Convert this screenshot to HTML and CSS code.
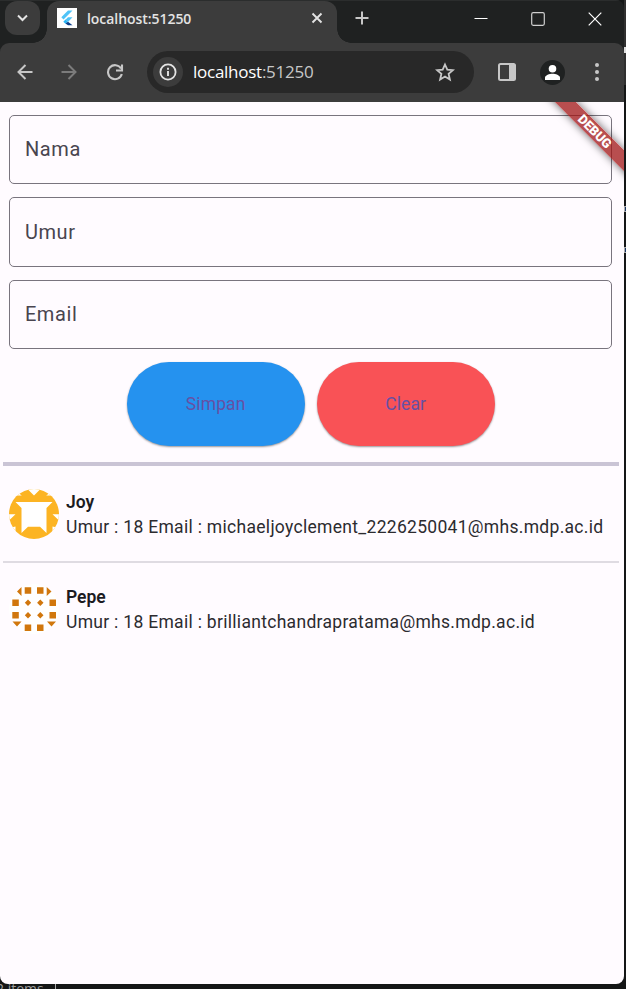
FILE: index.html
```html
<!DOCTYPE html>
<html lang="id">
<head>
<meta charset="utf-8">
<title>localhost:51250</title>
<link rel="stylesheet" href="styles.css">
</head>
<body>
<div class="behind-edge" aria-hidden="true"><i class="edge-cap"></i><i class="edge-mark m1"></i><i class="edge-mark m2"></i></div>
<div class="behind-bottom" aria-hidden="true"><span>2 items</span><i></i></div>
<div class="window">
  <header class="tabstrip">
    <button class="tab-search"><svg width="35" height="35" viewBox="0 0 35 35"><path d="M13 14.500l4.500 4.500 4.500-4.500" fill="none" stroke="#e3e3e3" stroke-width="2"/></svg></button>
    <div class="tab">
      <svg class="favicon" width="20" height="20" viewBox="0 0 20 20"><path fill="#fff" d="M0 0h20v20H0z"/><path fill="#4fc3f7" d="M11 2.500h4.500L6.500 11.500 4.300 9.300zM11 9.200h4.500L11 14l-2.500-2.300z"/><path fill="#27b6f6" d="M8.500 11.500l2.200 2.200-2.200 2-2.200-2z"/><path fill="#0b3f8c" d="M8.500 15.500L11 13.800l4.500 3.500H11z"/></svg>
      <span class="tab-title">localhost:51250</span>
      <svg class="tab-close" width="12" height="12" viewBox="0 0 12 12"><path d="M1.500 1.500l9 9m0-9l-9 9" stroke="#e3e3e3" stroke-width="1.900"/></svg>
    </div>
    <svg class="new-tab" width="14" height="14" viewBox="0 0 14 14"><path d="M7 .5v13M.5 7h13" stroke="#c7c7c7" stroke-width="2"/></svg>
    <div class="controls">
      <svg width="14" height="14" viewBox="0 0 14 14"><path d="M.5 6.500h13" stroke="#fff"/></svg>
      <svg width="14" height="14" viewBox="0 0 14 14"><rect x=".7" y=".7" width="12.600" height="12.600" rx="1.500" fill="none" stroke="#cfcfcf" stroke-width="1.200"/></svg>
      <svg width="14" height="14" viewBox="0 0 14 14"><path d="M.7.7l12.600 12.600m0-12.600L.7 13.300" stroke="#fff" stroke-width="1.200"/></svg>
    </div>
  </header>
  <nav class="toolbar">
    <svg class="back" width="16" height="16" viewBox="0 0 16 16"><path d="M15.500 8H2M8.500 1L1.500 8l7 7" fill="none" stroke="#c7c7c7" stroke-width="2"/></svg>
    <svg class="forward" width="16" height="16" viewBox="0 0 16 16"><path d="M.5 8H14M7.500 1l7 7-7 7" fill="none" stroke="#7b7b7b" stroke-width="2"/></svg>
    <svg class="reload" width="18" height="18" viewBox="0 0 18 18"><path d="M15 5.500A7 7 0 1 0 15.800 11M16 1.500v6h-6" fill="none" stroke="#c7c7c7" stroke-width="2.100"/></svg>
    <div class="address">
      <span class="site-info"><svg width="18" height="18" viewBox="0 0 18 18"><circle cx="9" cy="9" r="7.600" fill="none" stroke="#e3e3e3" stroke-width="1.800"/><path d="M9 8v5M9 4.700v2" stroke="#e3e3e3" stroke-width="1.900"/></svg></span>
      <span class="url">localhost<span>:51250</span></span>
      <svg class="star" width="20" height="20" viewBox="0 0 20 20"><path d="M10 2.500l2.300 5.200 5.600.5-4.300 3.700 1.300 5.600-4.900-3-4.900 3 1.300-5.600-4.300-3.700 5.600-.5z" fill="none" stroke="#c7c7c7" stroke-width="1.800"/></svg>
    </div>
    <svg class="panel" width="18" height="18" viewBox="0 0 18 18"><rect x="1" y="1" width="16" height="16" rx="1.500" fill="none" stroke="#c7c7c7" stroke-width="2"/><path d="M11 1h6v16h-6z" fill="#c7c7c7"/></svg>
    <svg class="profile" width="25" height="25" viewBox="0 0 25 25"><circle cx="12.500" cy="12.500" r="12.500" fill="#1f2121"/><circle cx="12.500" cy="8.700" r="3.800" fill="#fff"/><path d="M5 20v-2.200c0-2.500 4.500-4 7.500-4s7.500 1.500 7.500 4V20z" fill="#fff"/></svg>
    <svg class="more" width="4" height="18" viewBox="0 0 4 18"><g fill="#c7c7c7"><circle cx="2" cy="2" r="2"/><circle cx="2" cy="9" r="2"/><circle cx="2" cy="16" r="2"/></g></svg>
  </nav>
  <main class="app">
    <div class="debug"><span>DEBUG</span></div>
    <form class="form">
      <label class="field">Nama</label>
      <label class="field">Umur</label>
      <label class="field">Email</label>
      <div class="actions">
        <button type="button" class="save">Simpan</button>
        <button type="button" class="clear">Clear</button>
      </div>
    </form>
    <ul class="list">
      <li>
        <svg class="avatar" width="50" height="50" viewBox="0 0 50 50"><defs><clipPath id="round"><circle cx="25" cy="25" r="25"/></clipPath></defs><circle cx="25" cy="25" r="25" fill="#fcb423"/><g clip-path="url(#round)" fill="#fff"><path d="M6.500 13h37L37.500 19v25L31 37.700H19L12.500 44V19z"/><path d="M18.500 0h13L25 6.500zM8 6.500h4.800L10 4.500 16 1V0H5zM42 6.500h-4.800L40 4.500 34 1V0h11zM0 25.200h6.500L0 31.500zM50 25.200h-6.500l6.500 6.300zM6.500 37.500v6L0 39zM43.500 37.500v6L50 39z"/></g></svg>
        <div class="person"><strong>Joy</strong><span>Umur : 18 Email : michaeljoyclement_2226250041@mhs.mdp.ac.id</span></div>
      </li>
      <li>
        <svg class="avatar" width="50" height="50" viewBox="0 0 50 50"><circle cx="25" cy="25" r="25" fill="#fff"/><g fill="#d1770d"><path d="M15.700 3.200h6.500v6.500h-6.500zM28 3.200h6.500v6.500H28zM3.300 15.500h6.500V22H3.300zM40.500 15.500H47V22h-6.500zM3.300 28h6.500v6.500H3.300zM40.500 28H47v6.500h-6.500zM15.700 40.500h6.500V47h-6.500zM28 40.500h6.500V47H28z"/><path d="M12.500 3v9L8 7.500zM37.700 3v9l4.800-4.500zM3.500 37.500h9L8 42.500zM38 37.500h9L42.500 42.500zM19 15.500l3.200 3.200-3.200 3.200-3.200-3.200zM31.300 15.500l3.200 3.200-3.200 3.200-3.200-3.200zM19 28l3.200 3.200-3.200 3.200-3.200-3.200zM31.300 28l3.200 3.200-3.200 3.200-3.200-3.200z"/></g></svg>
        <div class="person"><strong>Pepe</strong><span>Umur : 18 Email : brilliantchandrapratama@mhs.mdp.ac.id</span></div>
      </li>
    </ul>
  </main>
</div>
</body>
</html>
```
FILE: styles.css
```css
* { box-sizing: border-box; }
body { margin: 0; width: 626px; height: 989px; overflow: hidden; position: relative; background: #141616; font-family: Roboto, sans-serif; }
svg { display: block; flex: none; }
button { border: 0; padding: 0; font: inherit; }
.window { position: relative; width: 624px; height: 984px; border-radius: 0 8px 8px 8px; overflow: hidden; background: #1f2121; display: flex; flex-direction: column; }
.behind-edge { position: absolute; left: 624px; top: 0; width: 2px; height: 85px; background: #303030; }
.edge-cap { position: absolute; top: 47px; left: 0; width: 2px; height: 6px; background: #ddd; }
.edge-mark { position: absolute; left: 0; width: 2px; height: 6px; border: 1px solid #aaa; border-right: 0; background: #173260; }
.m1 { top: 206px; }
.m2 { top: 247px; }
.behind-bottom { position: absolute; left: -4px; top: 980px; height: 9px; width: 150px; overflow: hidden; color: #9b9b9b; font: 14px/18px "Open Sans", sans-serif; }
.behind-bottom i { position: absolute; left: 59px; top: 4px; width: 1px; height: 5px; background: #aaa; }
.tabstrip { height: 43px; flex: none; display: flex; align-items: flex-start; padding-left: 5px; border-top: 1px solid #2b2d2d; }
.tab-search { position: relative; z-index: 1; width: 35px; height: 34px; border-radius: 12px; background: #3c3c3c; }
.tab { position: relative; margin-left: 7px; width: 290px; height: 42px; background: #3c3c3c; border-radius: 12px 12px 0 0; display: flex; padding: 7px 0 0 10px; }
.tab::before, .tab::after { content: ""; position: absolute; bottom: 0; width: 14px; height: 14px; }
.tab::before { left: -14px; background: radial-gradient(circle at 0 0, #1f2121 13.500px, #3c3c3c 14px); }
.tab::after { right: -14px; background: radial-gradient(circle at 100% 0, #1f2121 13.500px, #3c3c3c 14px); }
.tab-title { margin-left: 10px; width: 120px; font: 600 14px/22px "Open Sans", sans-serif; letter-spacing: -.05px; color: #e3e3e3; white-space: nowrap; }
.tab-close { margin: 4px 0 0 104px; }
.new-tab { margin: 10px 0 0 18px; }
.controls { margin-left: auto; padding: 11px 22px 0 0; display: flex; gap: 43px; }
.toolbar { height: 59px; flex: none; display: flex; align-items: center; padding: 0 0 1px 17px; background: #3c3c3c; border-radius: 9px 9px 0 0; }
.forward { margin-left: 28px; }
.reload { margin-left: 28.500px; }
.address { margin-left: 23.500px; width: 327px; height: 42px; background: #282828; border-radius: 21px; display: flex; align-items: center; padding: 0 19px 0 6px; }
.site-info { width: 30px; height: 30px; border-radius: 50%; background: #3c3c3c; display: grid; place-items: center; }
.url { margin-left: 10px; color: #fff; font: 17px/24px "Open Sans", sans-serif; letter-spacing: -.26px; white-space: nowrap; }
.url span { color: #c7c7c7; }
.star { margin-left: auto; }
.panel { margin-left: 24px; }
.profile { margin-left: 24px; }
.more { margin-left: 30px; }
.app { position: relative; flex: 1; background: #fffbff; padding: 12.500px 5px 0 3px; overflow: hidden; }
.form { padding: 0 7px 0 6.400px; }
.field { display: flex; align-items: center; height: 69.500px; margin-bottom: 13px; padding: 0 14.500px; border: 1.250px solid #79747e; border-radius: 5px; color: #49454f; font-size: 20px; letter-spacing: .6px; }
.actions { display: flex; justify-content: center; gap: 12px; }
.actions button { width: 178px; height: 84px; border-radius: 42px; color: #6750a4; font-size: 17.500px; letter-spacing: .12px; box-shadow: 0 1px 2px rgba(0,0,0,.4); }
.actions .save { background: #2592ef; }
.actions .clear { background: #f95256; }
.list { list-style: none; margin: 16px 0 0; padding: 0; border-top: 4px solid #cac4d5; }
.list li { display: flex; height: 95px; padding: 24px 0 0 6.300px; }
.list li + li { border-top: 2px solid #dfdbe2; padding-top: 22px; }
.avatar { margin-top: -.8px; }
.person { margin-left: 6.700px; display: flex; flex-direction: column; white-space: nowrap; color: #1c1b1f; }
.person strong { font-size: 17.500px; line-height: 25px; font-weight: 600; letter-spacing: -.05px; }
.person span { font-size: 17.500px; line-height: 25px; letter-spacing: .3px; color: #2c2b2f; }
.debug { position: absolute; width: 120px; height: 14.500px; left: 535px; top: 22px; transform: rotate(45deg); background: rgba(160,20,20,.75); box-shadow: 0 0 8px rgba(0,0,0,.6); display: grid; place-items: center; color: #fff; font: 900 13px/15px Roboto, sans-serif; letter-spacing: -.1px; z-index: 2; }
```
